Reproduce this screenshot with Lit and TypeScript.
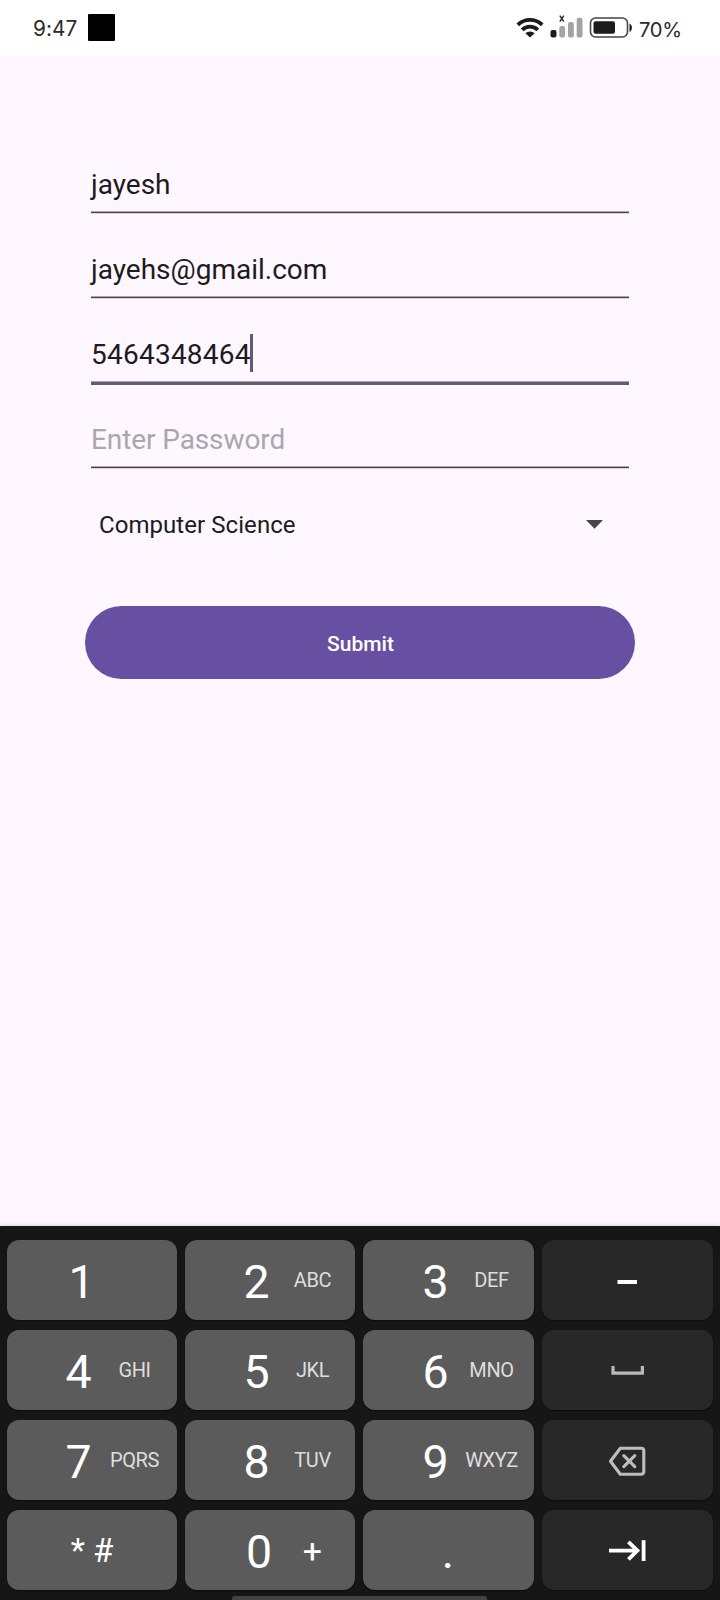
import { LitElement, html, css, svg } from "lit";
import { customElement, property } from "lit/decorators.js";
import { classMap } from "lit/directives/class-map.js";

@customElement("status-bar")
class StatusBar extends LitElement {
  static styles = css`
    :host {
      display: flex;
      justify-content: space-between;
      height: 56px;
      box-sizing: border-box;
      padding: 0 39px 0 33px;
      background: #fff;
      color: #2b2b2b;
      font-family: Inter, sans-serif;
      font-size: 20.2px;
      font-weight: 400;
      line-height: 57px;
    }
    .side { display: flex; }
    .time { width: 55px; white-space: nowrap; font-size: 20.8px; letter-spacing: 0.1px; }
    .square { width: 27px; height: 27px; margin-top: 14px; background: #000; border-radius: 1px; }
    .icons { display: block; width: 123px; height: 56px; }
    .percent { line-height: 60px; width: 42px; white-space: nowrap; letter-spacing: -0.3px; }
  `;
  render() {
    return html`
      <div class="side"><span class="time">9:47</span><span class="square"></span></div>
      <div class="side">
        <svg class="icons" viewBox="516 0 123 56" fill="none">
          <g stroke="#1c1c1c" stroke-width="3.8">
            <path d="M517.8 24.8a17.4 17.4 0 0 1 24.4 0" />
            <path d="M522.2 29.8a11.2 11.2 0 0 1 15.6 0" />
          </g>
          <path d="M525.3 33.3a6.8 6.8 0 0 1 9.4 0L530 37.6z" fill="#1c1c1c" />
          <rect x="550.5" y="30" width="6" height="7.5" rx="2" fill="#1c1c1c" />
          <g fill="#a3a3a3">
            <rect x="559.3" y="26" width="5.8" height="11.5" rx="2" />
            <rect x="568" y="22" width="5.8" height="15.5" rx="2" />
            <rect x="576.7" y="17.7" width="5.8" height="19.8" rx="2" />
          </g>
          <path d="M559.8 15.6l4 6M563.8 15.6l-4 6" stroke="#1c1c1c" stroke-width="1.3" />
          <rect x="590.5" y="18" width="37" height="19" rx="5" stroke="#444" stroke-width="1.6" />
          <rect x="593.5" y="21.2" width="21.5" height="12.6" rx="2" fill="#1c1c1c" />
          <path d="M629.5 23.5c3.2 1.2 3.2 7.2 0 8.5z" fill="#1c1c1c" />
        </svg>
        <span class="percent">70%</span>
      </div>
    `;
  }
}

@customElement("text-field")
class TextField extends LitElement {
  @property() value = "";
  @property() placeholder = "";
  @property({ type: Boolean }) active = false;
  static styles = css`
    :host { display: block; height: 85px; box-sizing: border-box; padding-top: 38px; }
    .text {
      display: flex;
      height: 36px;
      line-height: 35px;
      font-size: 28px;
      letter-spacing: 0;
      white-space: nowrap;
      color: #1d1b20;
    }
    .hint { color: #aba6ae; letter-spacing: -0.1px; }
    .digits { letter-spacing: 0.24px; }
    .caret { width: 3px; height: 38px; margin-top: -3px; margin-left: -1px; background: #625b71; }
    .line {
      height: 1px;
      margin-top: 8px;
      background: #49454f;
      border-top: 1px solid #aba6ae;
      border-bottom: 1px solid #d9d3dc;
    }
    .focus { height: 3px; background: #625b71; border-bottom: 0; }
  `;
  render() {
    return html`
      <div class=${classMap({ text: true, hint: !this.value, digits: /^\d+$/.test(this.value) })}>
        <span>${this.value || this.placeholder}</span>${this.active ? html`<span class="caret"></span>` : ""}
      </div>
      <div class=${classMap({ line: true, focus: this.active })}></div>
    `;
  }
}

type Key = { main?: string; sub?: string; kind?: string };

const KEYS: Key[] = [
  { main: "1", kind: "one" }, { main: "2", sub: "ABC" }, { main: "3", sub: "DEF", kind: "third" }, { kind: "minus" },
  { main: "4", sub: "GHI" }, { main: "5", sub: "JKL" }, { main: "6", sub: "MNO", kind: "third" }, { kind: "space" },
  { main: "7", sub: "PQRS" }, { main: "8", sub: "TUV" }, { main: "9", sub: "WXYZ", kind: "third" }, { kind: "delete" },
  { main: "* #", kind: "symbols" }, { main: "0", sub: "+", kind: "zero" }, { main: ".", kind: "dot" }, { kind: "next" },
];

const GLYPHS: Record<string, unknown> = {
  minus: svg`<path d="M15.5 42H35" stroke="#fff" stroke-width="4" />`,
  space: svg`<path d="M11 36v7.2H40.4V36" stroke="#b9b9b9" stroke-width="3.2" />`,
  delete: svg`<g stroke="#bdbdbd" stroke-width="3.1" stroke-linejoin="round">
    <path d="M18.3 28.2H39.2q2.6 0 2.6 2.6V51.6q0 2.6-2.6 2.6H18.3L8.5 41.2z" />
    <path d="M21.8 35.7l11 11M32.8 35.7l-11 11" stroke-linecap="round" /></g>`,
  next: svg`<path d="M7 40.6H35.4M26.4 31.8l9 8.8-9 8.8" stroke="#fff" stroke-width="3.8" />
    <path d="M41.6 30.2V51" stroke="#fff" stroke-width="3.8" />`,
};

@customElement("key-pad")
class KeyPad extends LitElement {
  static styles = css`
    :host {
      display: flex;
      flex-direction: column;
      height: 374px;
      box-sizing: border-box;
      padding: 14px 7px 0;
      background: #161616;
      box-shadow: 0 0 5px rgba(0, 0, 0, 0.18);
    }
    .keys { display: grid; grid-template-columns: 170px 170px 171px 171px; gap: 10px 8px; }
    .key {
      display: grid;
      grid-template-columns: 58px 27px 1fr;
      height: 80px;
      overflow: hidden;
      border-radius: 12px;
      background: #5b5b5b;
      box-shadow: 0 1px 1px #0c0c0c;
      color: #fff;
      line-height: 80px;
      text-align: center;
      white-space: nowrap;
    }
    .dark { display: flex; justify-content: center; background: #282828; }
    .glyph { display: block; width: 50px; height: 80px; margin-left: -1px; }
    .main { grid-column: 2; font-size: 46.5px; line-height: 84px; }
    .sub { font-size: 20px; color: #dedede; letter-spacing: -0.4px; }
    .one { grid-template-columns: 61px 27px 1fr; }
    .third { grid-template-columns: 59px 27px 1fr; }
    .symbols .main { grid-column: 1 / -1; font-size: 33px; line-height: 81px; }
    .zero { grid-template-columns: 60.5px 27px 1fr; }
    .zero .sub { font-size: 34px; line-height: 82px; color: #fff; padding-right: 3px; }
    .dot .main { grid-column: 1 / -1; padding-right: 1px; }
    .home { width: 255px; height: 4px; margin: 6px 0 0 225px; background: #434343; border-radius: 3px 3px 0 0; }
  `;
  private renderKey(k: Key) {
    const dark = !k.main;
    const classes = { key: true, dark, [k.kind ?? "digit"]: true };
    return html`<div class=${classMap(classes)}>
      ${dark
        ? html`<svg class="glyph" viewBox="0 0 50 80" fill="none">${GLYPHS[k.kind!]}</svg>`
        : html`<span class="main">${k.main}</span>${k.sub ? html`<span class="sub">${k.sub}</span>` : ""}`}
    </div>`;
  }
  render() {
    return html`<div class="keys">${KEYS.map((k) => this.renderKey(k))}</div><div class="home"></div>`;
  }
}

@customElement("app-root")
class AppRoot extends LitElement {
  static styles = css`
    :host {
      display: flex;
      flex-direction: column;
      height: 1600px;
      overflow: hidden;
      background: #fef7ff;
      font-family: Roboto, sans-serif;
    }
    .form { flex: 1; padding: 73px 85px 0; }
    .fields { padding: 0 6px; }
    .spinner {
      display: flex;
      align-items: center;
      justify-content: space-between;
      height: 110px;
      padding: 0 32px 0 14px;
      font-size: 24px;
      letter-spacing: 0.06px;
      line-height: 110px;
      color: #1d1b20;
    }
    .label { padding-top: 2px; }
    .arrow { width: 17px; height: 9px; }
    .submit {
      display: block;
      width: 100%;
      height: 73px;
      margin-top: 27px;
      padding: 2px 0 0 1px;
      border: 0;
      border-radius: 37px;
      background: #674fa2;
      color: #fff;
      font: 500 21px Roboto, sans-serif;
    }
  `;
  render() {
    return html`
      <status-bar></status-bar>
      <div class="form">
        <div class="fields">
          <text-field value="jayesh"></text-field>
          <text-field value="jayehs@gmail.com"></text-field>
          <text-field value="5464348464" active></text-field>
          <text-field placeholder="Enter Password"></text-field>
        </div>
        <div class="spinner">
          <span class="label">Computer Science</span>
          <svg class="arrow" viewBox="0 0 17 9"><path d="M0 0h17L8.5 8.7z" fill="#49454f" /></svg>
        </div>
        <button class="submit">Submit</button>
      </div>
      <key-pad></key-pad>
    `;
  }
}
